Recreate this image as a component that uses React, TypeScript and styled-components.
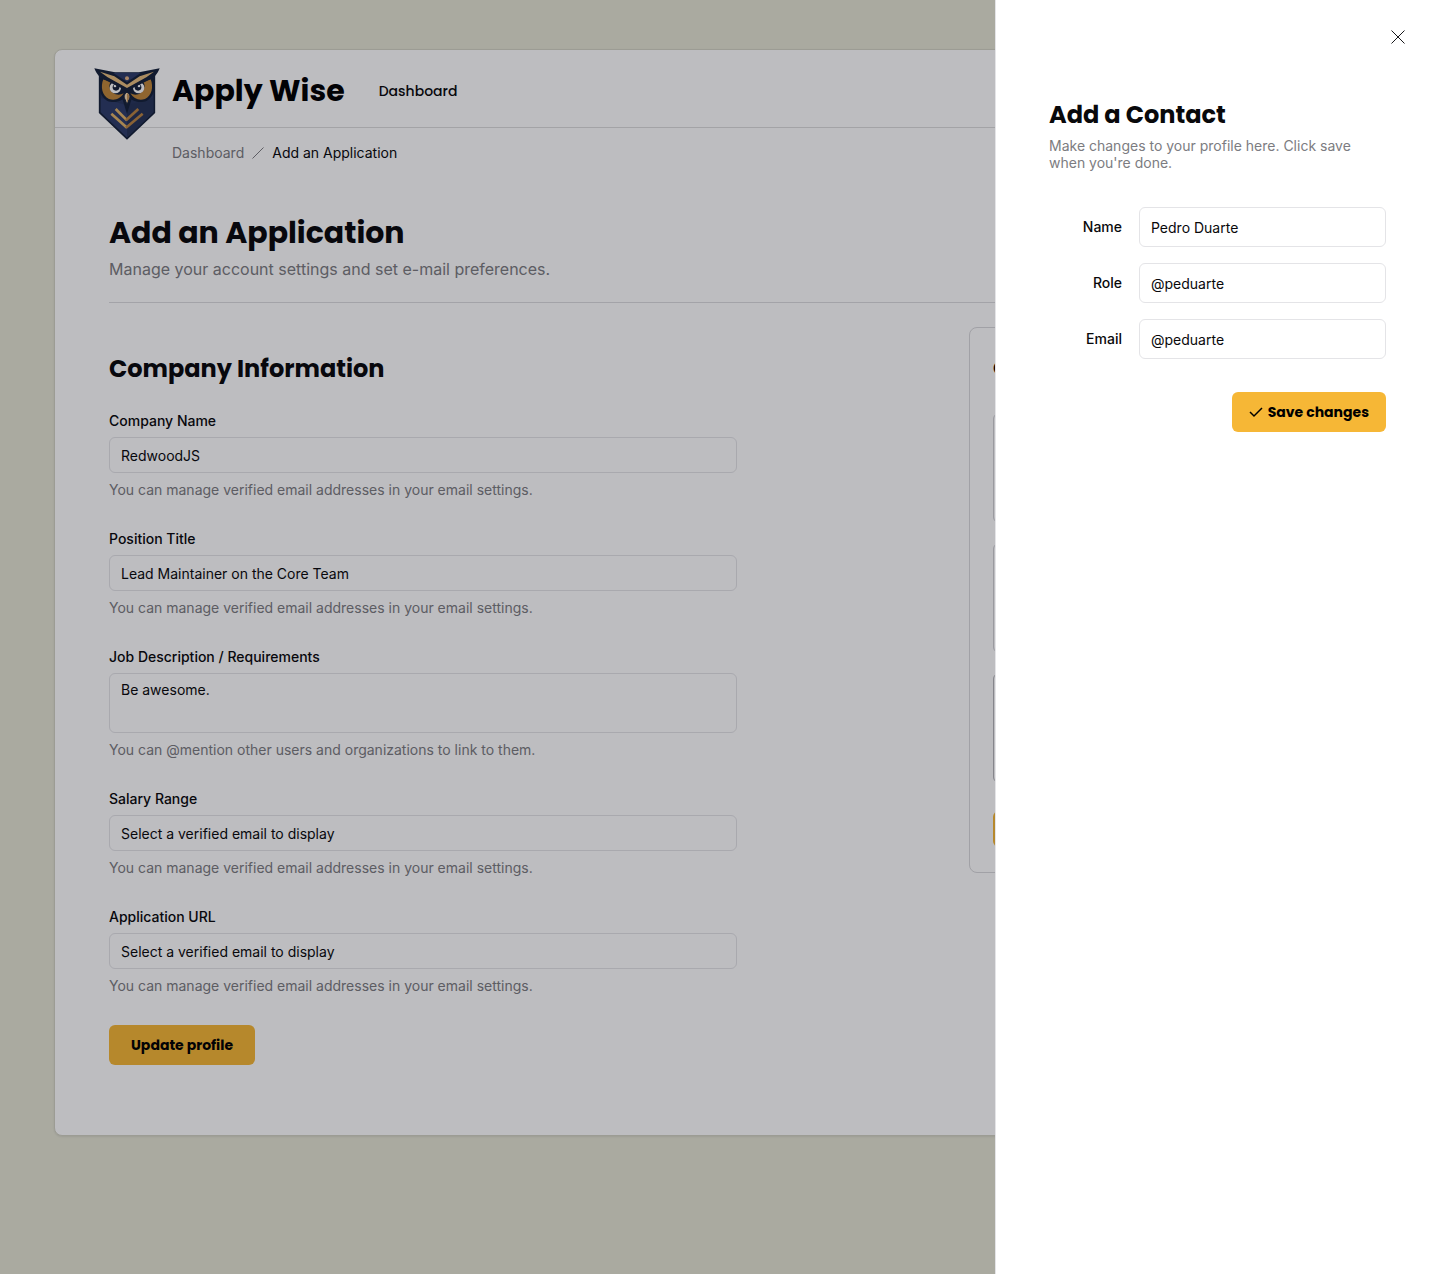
import React from "react";
import styled, { createGlobalStyle } from "styled-components";

const display = `Poppins, Inter, "Open Sans", sans-serif`;
const yellow = "#f6b736";
const ink = "#09090b";
const line = "#e4e4e7";
const muted = "#7c7c81";

const GlobalStyle = createGlobalStyle`
  *, *::before, *::after { box-sizing: border-box; }
  body {
    margin: 0;
    background: #e5e5d4;
    color: ${ink};
    font-family: Inter, "Open Sans", sans-serif;
    font-size: 14px;
    line-height: 20px;
  }
  h1, h2, p, ol, ul { margin: 0; padding: 0; }
  button, input, textarea { font: inherit; color: inherit; }
`;

const Page = styled.div`
  min-height: 100vh;
  padding: 49px 54px;
`;

const Shell = styled.div`
  background: #ffffff;
  border: 1px solid #d3d3c3;
  border-radius: 8px;
  box-shadow: 0 1px 2px rgba(0, 0, 0, 0.08);
`;

const Header = styled.header`
  display: flex;
  align-items: flex-start;
  padding: 18px 39px 0;
  border-bottom: 1px solid #dcdcdc;
`;

const Brand = styled.a`
  display: flex;
  gap: 12px;
  margin-bottom: -13px;
  color: #000000;
  font-family: ${display};
  font-size: 30px;
  font-weight: 700;
  line-height: 46px;
  text-decoration: none;
`;

const Nav = styled.nav`
  margin-left: 34px;
`;

const NavLink = styled.a`
  color: ${ink};
  font-family: ${display};
  font-size: 14px;
  font-weight: 500;
  line-height: 46px;
  text-decoration: none;
`;

const Breadcrumbs = styled.ol`
  display: flex;
  align-items: center;
  gap: 8px;
  padding: 15px 54px 0 117px;
  list-style: none;
`;

const Crumb = styled.li<{ $current?: boolean }>`
  display: flex;
  color: ${(p) => (p.$current ? ink : muted)};

  a { color: inherit; text-decoration: none; }
`;

const Main = styled.main`
  padding: 50px 54px 70px;
`;

const Intro = styled.div`
  padding-bottom: 21px;
  border-bottom: 1px solid #dcdcdf;
`;

const PageTitle = styled.h1`
  font-family: ${display};
  font-size: 30px;
  font-weight: 700;
  line-height: 40px;
`;

const Lead = styled.p`
  margin-top: 4px;
  color: ${muted};
  font-size: 16px;
  line-height: 24px;
`;

const Columns = styled.div`
  display: grid;
  grid-template-columns: minmax(0, 628px) 362px;
  justify-content: space-between;
  align-items: start;
  column-gap: 48px;
  padding-top: 24px;
`;

const SectionTitle = styled.h2`
  font-family: ${display};
  font-size: 24px;
  font-weight: 700;
  line-height: 32px;
`;

const CompanyForm = styled.form`
  display: flex;
  flex-direction: column;
  align-items: flex-start;
  gap: 30px;
  padding-top: 26px;

  ${SectionTitle} { margin-bottom: -4px; }
`;

const Field = styled.div`
  display: flex;
  flex-direction: column;
  width: 100%;
`;

const Label = styled.label`
  font-weight: 500;
`;

const TextInput = styled.input<{ $tall?: boolean }>`
  width: 100%;
  height: ${(p) => (p.$tall ? 40 : 36)}px;
  padding: 0 11px;
  background: transparent;
  border: 1px solid ${line};
  border-radius: 6px;
`;

const TextArea = styled.textarea`
  display: block;
  width: 100%;
  height: 60px;
  padding: 6px 11px;
  background: transparent;
  border: 1px solid ${line};
  border-radius: 6px;
  resize: none;
`;

const Control = styled.div`
  margin: 6px 0 8px;
`;

const Help = styled.p`
  color: ${muted};
  line-height: 18px;
`;

const Button = styled.button<{ $pad: number; $height?: number }>`
  display: inline-flex;
  align-items: center;
  justify-content: center;
  gap: 5px;
  height: ${(p) => p.$height ?? 40}px;
  padding: 0 ${(p) => p.$pad}px;
  background: ${yellow};
  border: 0;
  border-radius: 6px;
  color: #000000;
  font-family: ${display};
  font-weight: 700;
  white-space: nowrap;
`;

const ContactsPanel = styled.aside`
  display: flex;
  flex-direction: column;
  padding: 24px 23px 25px;
  border: 1px solid #d9d9dc;
  border-radius: 8px;
`;

const PanelTitle = styled(SectionTitle)`
  font-size: 20px;
`;

const ContactList = styled.ul`
  display: grid;
  gap: 20px;
  margin: 29px 0 28px;
  list-style: none;
`;

const ContactCard = styled.li<{ $active?: boolean }>`
  height: 110px;
  border: 1px solid ${(p) => (p.$active ? "#b4b4b8" : "#cfcfd3")};
  border-radius: 6px;
`;

const Overlay = styled.div`
  position: fixed;
  inset: 0;
  background: rgba(9, 9, 18, 0.265);
`;

const Sheet = styled.div`
  position: fixed;
  top: 0;
  right: 0;
  bottom: 0;
  width: 445px;
  max-width: 100%;
  padding: 99px 54px 54px 53px;
  background: #ffffff;
  border-left: 1px solid ${line};
`;

const CloseButton = styled.button`
  position: absolute;
  top: 24px;
  right: 29px;
  display: grid;
  place-items: center;
  width: 26px;
  height: 26px;
  padding: 0;
  background: none;
  border: 0;
`;

const SheetText = styled.p`
  max-width: 320px;
  margin-top: 6px;
  color: ${muted};
  line-height: 17px;
`;

const ContactForm = styled.form`
  display: flex;
  flex-direction: column;
  gap: 16px;
  margin-top: 36px;
`;

const ContactRow = styled.div`
  display: grid;
  grid-template-columns: 73px 1fr;
  align-items: center;
  gap: 17px;

  ${Label} { text-align: right; }
`;

const Actions = styled.div`
  display: flex;
  justify-content: flex-end;
  padding-top: 17px;
`;

function OwlLogo() {
  return (
    <svg width="66" height="72" viewBox="27 38 198 216" aria-hidden="true">
      <path d="M44 53H208V172L126 250L44 172Z" fill="#28365c" stroke="#15223a" strokeWidth="5" />
      <path d="M126 150V246L48 171V128Z" fill="#2d3c69" />
      <path d="M126 150V246L204 171V128Z" fill="#263357" />
      <path d="M112 130L126 176L140 130Z" fill="#15223a" />
      <path
        d="M46 66C38 92 44 124 66 136C90 146 112 138 126 120C140 138 162 146 186 136C208 124 214 92 206 66L126 96Z"
        fill="#15223a"
      />
      <path d="M55 72C46 94 51 122 72 131C90 137 106 130 116 114C98 124 78 114 74 98C72 90 74 84 78 80Z" fill="#c1883a" />
      <path d="M197 72C206 94 201 122 180 131C162 137 146 130 136 114C154 124 174 114 178 98C180 90 178 84 174 80Z" fill="#c1883a" />
      <circle cx="91" cy="97" r="17" fill="#ffffff" />
      <circle cx="161" cy="97" r="17" fill="#ffffff" />
      <circle cx="93" cy="96" r="10" fill="#15223a" />
      <circle cx="159" cy="96" r="10" fill="#15223a" />
      <circle cx="90" cy="92" r="4" fill="#ffffff" />
      <circle cx="162" cy="92" r="4" fill="#ffffff" />
      <path d="M28 39L86 50L126 74L166 50L224 39C218 56 206 69 190 75L126 107L62 75C46 69 34 56 28 39Z" fill="#15223a" />
      <path d="M84 52H168L126 80Z" fill="#2d3c69" />
      <path d="M45 49L88 63L126 88L164 63L207 49L184 66L126 98L68 66Z" fill="#e6bd7e" />
      <circle cx="126" cy="69" r="6" fill="#e0b284" />
      <path d="M126 110C117 117 116 124 119 130L126 147L133 130C136 124 135 117 126 110Z" fill="#f6dcb4" stroke="#15223a" strokeWidth="3" />
      <path d="M126 113V143L132 129C134 122 132 117 126 113Z" fill="#c99758" />
      <g fill="none" strokeWidth="8">
        <path d="M92 161L126 195" stroke="#e2b468" />
        <path d="M123 195L160 161" stroke="#b88442" />
        <path d="M79 175L126 217" stroke="#e2b468" />
        <path d="M123 217L173 175" stroke="#b88442" />
      </g>
    </svg>
  );
}

const emailHelp = "You can manage verified email addresses in your email settings.";

const companyFields = [
  { id: "company", label: "Company Name", value: "RedwoodJS", help: emailHelp },
  { id: "position", label: "Position Title", value: "Lead Maintainer on the Core Team", help: emailHelp },
  {
    id: "description",
    label: "Job Description / Requirements",
    value: "Be awesome.",
    help: "You can @mention other users and organizations to link to them.",
    multiline: true,
  },
  { id: "salary", label: "Salary Range", value: "Select a verified email to display", help: emailHelp },
  { id: "url", label: "Application URL", value: "Select a verified email to display", help: emailHelp },
];

const contactFields = [
  { id: "name", label: "Name", value: "Pedro Duarte" },
  { id: "role", label: "Role", value: "@peduarte" },
  { id: "email", label: "Email", value: "@peduarte" },
];

export default function App() {
  return (
    <>
      <GlobalStyle />
      <Page>
        <Shell>
          <Header>
            <Brand href="#">
              <OwlLogo />
              Apply Wise
            </Brand>
            <Nav>
              <NavLink href="#">Dashboard</NavLink>
            </Nav>
          </Header>
          <Breadcrumbs>
            <Crumb>
              <a href="#">Dashboard</a>
            </Crumb>
            <Crumb aria-hidden="true">
              <svg width="12" height="12" viewBox="0 0 12 12" fill="none" stroke="currentColor">
                <path d="M0.5 11.5L11.5 0.5" />
              </svg>
            </Crumb>
            <Crumb $current aria-current="page">
              Add an Application
            </Crumb>
          </Breadcrumbs>
          <Main>
            <Intro>
              <PageTitle>Add an Application</PageTitle>
              <Lead>Manage your account settings and set e-mail preferences.</Lead>
            </Intro>
            <Columns>
              <CompanyForm>
                <SectionTitle>Company Information</SectionTitle>
                {companyFields.map((f) => (
                  <Field key={f.id}>
                    <Label htmlFor={f.id}>{f.label}</Label>
                    <Control>
                      {f.multiline ? (
                        <TextArea id={f.id} defaultValue={f.value} />
                      ) : (
                        <TextInput id={f.id} defaultValue={f.value} />
                      )}
                    </Control>
                    <Help>{f.help}</Help>
                  </Field>
                ))}
                <Button type="button" $pad={22}>
                  Update profile
                </Button>
              </CompanyForm>
              <ContactsPanel>
                <PanelTitle>Contacts</PanelTitle>
                <ContactList>
                  <ContactCard />
                  <ContactCard />
                  <ContactCard $active />
                </ContactList>
                <Button type="button" aria-label="Add a contact" $pad={16} $height={36} />
              </ContactsPanel>
            </Columns>
          </Main>
        </Shell>
      </Page>
      <Overlay />
      <Sheet role="dialog" aria-labelledby="sheet-title">
        <CloseButton type="button" aria-label="Close">
          <svg width="14" height="14" viewBox="0 0 14 14" fill="none" stroke="#18181b">
            <path d="M0.5 0.5L13.5 13.5M13.5 0.5L0.5 13.5" />
          </svg>
        </CloseButton>
        <SectionTitle id="sheet-title">Add a Contact</SectionTitle>
        <SheetText>Make changes to your profile here. Click save when you're done.</SheetText>
        <ContactForm>
          {contactFields.map((f) => (
            <ContactRow key={f.id}>
              <Label htmlFor={f.id}>{f.label}</Label>
              <TextInput $tall id={f.id} defaultValue={f.value} />
            </ContactRow>
          ))}
          <Actions>
            <Button type="button" $pad={17}>
              <svg width="14" height="14" viewBox="0 0 14 14" fill="none" stroke="currentColor" strokeWidth="1.5" aria-hidden="true">
                <path d="M1 7L5 11L13 3" />
              </svg>
              Save changes
            </Button>
          </Actions>
        </ContactForm>
      </Sheet>
    </>
  );
}
